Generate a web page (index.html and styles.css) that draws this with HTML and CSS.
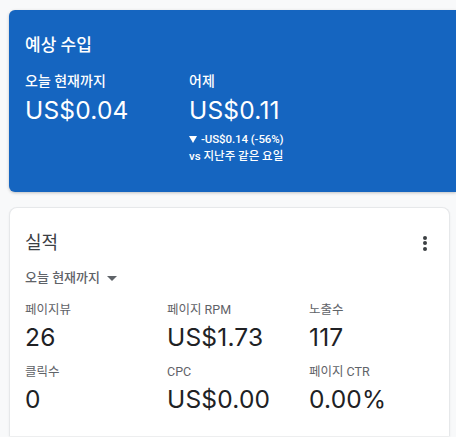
FILE: index.html
```html
<!DOCTYPE html>
<html lang="ko">
<head>
<meta charset="utf-8">
<link rel="stylesheet" href="styles.css">
</head>
<body>
<div class="page">
  <section class="earnings">
    <h2 class="earnings-title">예상 수입</h2>
    <div class="earnings-row">
      <div class="earn-col">
        <div class="earn-label">오늘 현재까지</div>
        <div class="earn-value">US$0.04</div>
      </div>
      <div class="earn-col">
        <div class="earn-label">어제</div>
        <div class="earn-value">US$0.11</div>
        <div class="earn-delta delta-num"><span class="down"></span>-US$0.14 (-56%)</div>
        <div class="earn-delta">vs 지난주 같은 요일</div>
      </div>
    </div>
  </section>
  <section class="perf">
    <div class="perf-head">
      <h2 class="perf-title">실적</h2>
      <div class="kebab"><span></span><span></span><span></span></div>
    </div>
    <div class="range">오늘 현재까지 <span class="caret"></span></div>
    <div class="metrics">
      <div class="metric"><div class="m-label">페이지뷰</div><div class="m-value">26</div></div>
      <div class="metric"><div class="m-label">페이지 RPM</div><div class="m-value">US$1.73</div></div>
      <div class="metric"><div class="m-label">노출수</div><div class="m-value">117</div></div>
      <div class="metric"><div class="m-label">클릭수</div><div class="m-value">0</div></div>
      <div class="metric"><div class="m-label">CPC</div><div class="m-value">US$0.00</div></div>
      <div class="metric"><div class="m-label">페이지 CTR</div><div class="m-value">0.00%</div></div>
    </div>
  </section>
</div>
</body>
</html>
```
FILE: styles.css
```css
html, body {
  margin: 0;
  padding: 0;
  background: #f8f9fa;
  overflow: hidden;
  width: 456px;
  height: 437px;
}
body {
  font-family: Roboto, "Noto Sans CJK KR", sans-serif;
}
.page {
  padding: 10px 0 0 9px;
  display: flex;
  flex-direction: column;
  gap: 15px;
}
.earnings {
  width: 447px;
  height: 182px;
  box-sizing: border-box;
  background: #1565c0;
  border-radius: 6px 0 0 6px;
  padding: 23px 16px 0 16px;
  color: #fff;
  box-shadow: 0 1px 3px rgba(60,64,67,0.3);
}
.earnings-title {
  margin: 0;
  font-size: 17px;
  line-height: 24px;
  font-weight: 500;
}
.earnings-row {
  display: flex;
  margin-top: 14px;
}
.earn-col {
  width: 164px;
}
.earn-label {
  font-size: 14px;
  line-height: 20px;
  font-weight: 500;
}
.earn-value {
  font-family: Inter, Roboto, sans-serif;
  font-size: 24.5px;
  letter-spacing: 0.2px;
  line-height: 32px;
  margin-top: 3px;
}
.earn-col .earn-value + .earn-delta {
  margin-top: 5px;
}
.earn-delta {
  font-size: 11.5px;
  line-height: 17px;
  font-weight: 500;
  display: flex;
  align-items: center;
}
.delta-num {
  font-size: 11.5px;
  letter-spacing: -0.1px;
}
.down {
  width: 0;
  height: 0;
  border-left: 4px solid transparent;
  border-right: 4px solid transparent;
  border-top: 7px solid #fff;
  margin-right: 4px;
}
.perf {
  width: 441px;
  height: 229px;
  box-sizing: border-box;
  background: #fff;
  border: 1px solid #e6e8ea;
  border-bottom: none;
  border-radius: 8px 8px 0 0;
  padding: 23px 0 0 15px;
  box-shadow: 0 1px 2px rgba(60,64,67,0.08);
}
.perf-head {
  display: flex;
  justify-content: space-between;
  align-items: center;
  padding-right: 22px;
}
.perf-title {
  margin: 0;
  font-size: 18px;
  line-height: 24px;
  font-weight: 400;
  color: #3c4043;
}
.kebab {
  display: flex;
  flex-direction: column;
  gap: 1.5px;
}
.kebab span {
  width: 4px;
  height: 4px;
  border-radius: 50%;
  background: #3c4043;
}
.range {
  margin-top: 14px;
  font-size: 13px;
  line-height: 18px;
  font-weight: 500;
  color: #5f6368;
  display: flex;
  align-items: center;
  gap: 7px;
}
.caret {
  width: 0;
  height: 0;
  border-left: 5px solid transparent;
  border-right: 5px solid transparent;
  border-top: 5px solid #5f6368;
}
.metrics {
  margin-top: 15px;
  display: grid;
  grid-template-columns: 142px 142px 142px;
  row-gap: 11px;
}
.m-label {
  font-size: 12.5px;
  line-height: 16px;
  color: #5f6368;
}
.m-value {
  font-family: Inter, Roboto, sans-serif;
  margin-top: 3px;
  font-size: 24.5px;
  letter-spacing: 0.2px;
  line-height: 32px;
  color: #202124;
}
```
